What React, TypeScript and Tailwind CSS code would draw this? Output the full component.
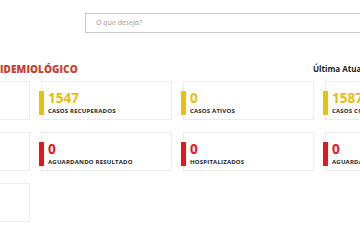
const cards = [
  { value: "0", label: "ÓBITOS", color: "yellow" },
  { value: "1547", label: "CASOS RECUPERADOS", color: "yellow" },
  { value: "0", label: "CASOS ATIVOS", color: "yellow" },
  { value: "1587", label: "CASOS CONFIRMADOS", color: "yellow" },
  { value: "0", label: "DESCARTADOS", color: "red" },
  { value: "0", label: "AGUARDANDO RESULTADO", color: "red" },
  { value: "0", label: "HOSPITALIZADOS", color: "red" },
  { value: "0", label: "AGUARDANDO COLETA", color: "red" },
  { value: "0", label: "SUSPEITOS", color: "red" },
];

const StatCard = ({ value, label, color }: { value: string; label: string; color: string }) => {
  const isRed = color === "red";
  return (
    <div className="relative h-[39px] border border-[#ececec] bg-white pl-[6px] pt-[9px]">
      <div
        className={`absolute left-[-3px] top-[9px] h-[24px] w-[5px] ${isRed ? "bg-[#e3171c]" : "bg-[#e8c10a]"}`}
      />
      <div
        className={`text-[13.5px] font-bold leading-[14px] ${isRed ? "text-[#e3171c]" : "text-[#e5bd0c]"}`}
      >
        {value}
      </div>
      <div className="mt-[3px] text-[6px] font-bold leading-[7px] tracking-[0.2px] text-[#222]">{label}</div>
    </div>
  );
};

export default function App() {
  return (
    <div className="h-[240px] w-[360px] overflow-hidden bg-white font-['Open_Sans',sans-serif]">
      <div className="pl-[85px] pt-[13px]">
        <div className="flex h-[20px] w-[320px] items-center border border-[#c9c9c9] pl-[10px]">
          <span className="text-[7.5px] italic text-[#9a9a9a]">O que deseja?</span>
        </div>
      </div>

      <div className="ml-[-101px] w-[557px]">
        <div className="mt-[30px] flex h-[12px] items-center">
          <h2 className="ml-[49px] text-[10px] font-extrabold leading-[12px] tracking-[0.1px] text-[#c5402c]">
            PAINEL EPIDEMIOLÓGICO
          </h2>
          <p className="ml-auto w-[143px] whitespace-nowrap text-[8px] font-bold leading-[12px] text-[#222]">
            Última Atualização: 20/05/2021
          </p>
        </div>

        <div className="mt-[6px] grid grid-cols-4 gap-x-[11px] gap-y-[12px]">
          {cards.map((c, i) => (
            <StatCard key={i} value={c.value} label={c.label} color={c.color} />
          ))}
        </div>
      </div>
    </div>
  );
}
